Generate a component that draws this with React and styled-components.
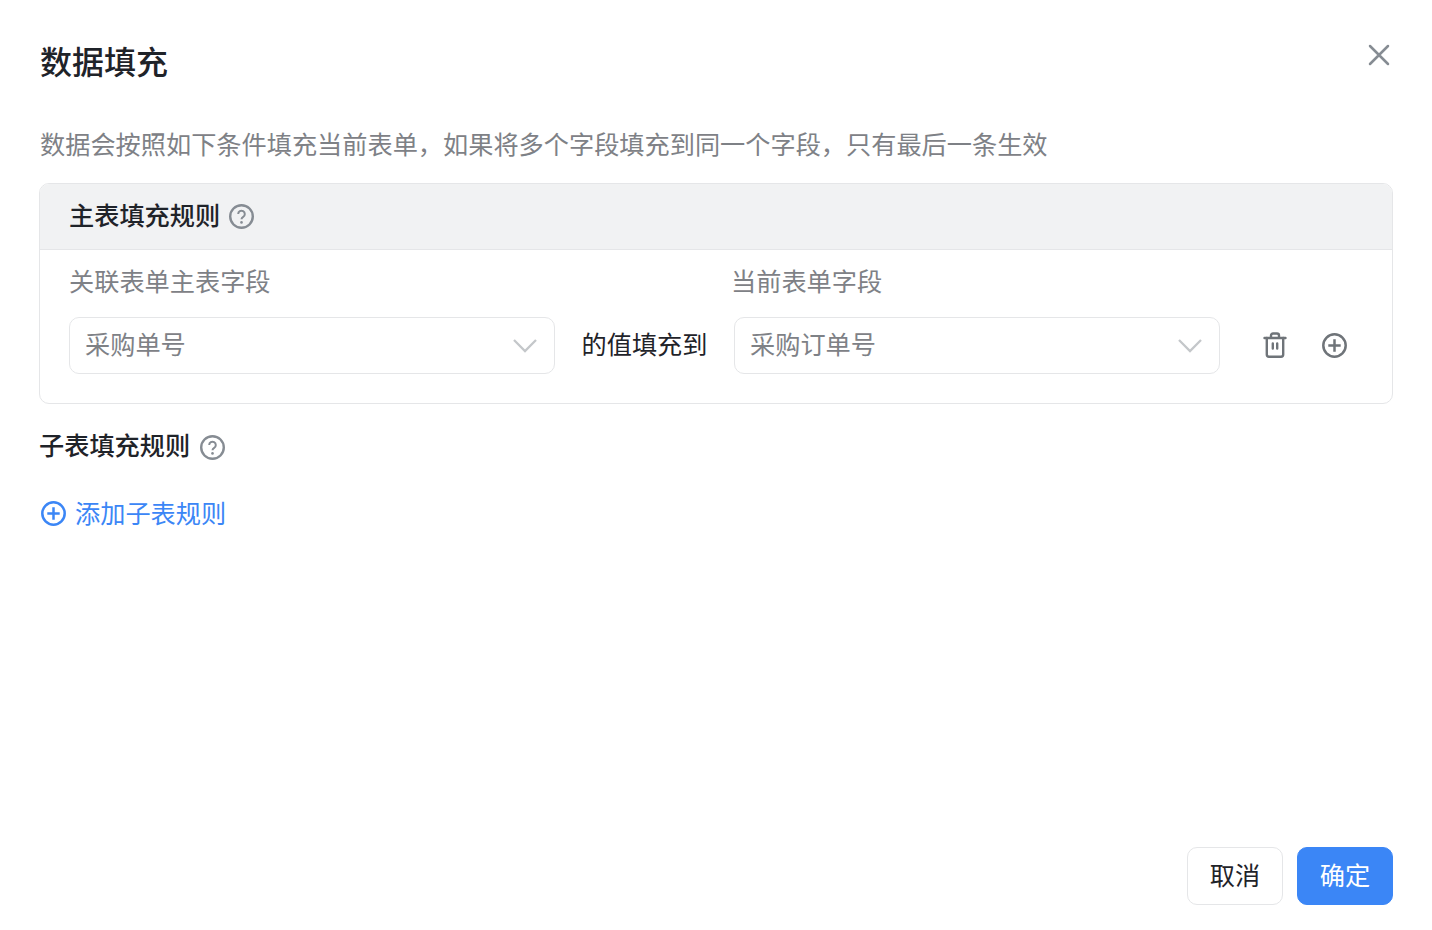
import React from "react";
import styled, { createGlobalStyle } from "styled-components";

const Global = createGlobalStyle`
  html, body { margin: 0; padding: 0; background: #fff; }
  body { font-family: "Liberation Sans", "Noto Sans CJK SC", sans-serif; }
  * { box-sizing: border-box; }
`;
const Dialog = styled.div`
  position: relative; width: 1432px; height: 930px; background: #fff;
  padding: 0 39px 25px 39px; display: flex; flex-direction: column; overflow: hidden;
`;
const Title = styled.h1`
  margin: 0 0 0 1px; padding-top: 41px; height: 127px; font-size: 32px; line-height: 44px; font-weight: 500; color: #1f2329;
`;
const Close = styled.button`
  position: absolute; top: 43px; right: 41px; width: 24px; height: 24px; padding: 0; border: 0; background: none; color: #868c93;
`;
const Desc = styled.p`
  margin: 0 0 0 1px; height: 56px; font-size: 25.2px; line-height: 36px; color: #7e8186;
`;
const Panel = styled.section`
  border: 1px solid #e5e6e8; border-radius: 10px; height: 221px; overflow: hidden;
`;
const PanelHead = styled.div`
  height: 66px; background: #f1f2f3; border-bottom: 1px solid #e5e6e8; padding-left: 29px;
  display: flex; align-items: center; gap: 9px;
`;
const SectionTitle = styled.span`
  font-size: 25.2px; line-height: 36px; font-weight: 500; color: #1f2329; position: relative; top: -1px;
`;
const Help = styled.svg`
  width: 25px; height: 25px; color: #868c93; flex: none;
`;
const PanelBody = styled.div`padding: 14px 44px 0 29px;`;
const Labels = styled.div`display: flex; height: 53px;`;
const Label = styled.span`
  font-size: 25.2px; line-height: 36px; color: #7e8186; width: ${p => p.$w}px;
`;
const Row = styled.div`display: flex; align-items: center;`;
const Select = styled.div`
  flex: none; width: 486px; height: 57px; border: 1px solid #e5e6e8; border-radius: 10px; padding: 0 16px 0 15px;
  display: flex; align-items: center; justify-content: space-between; font-size: 25.2px; color: #7e8186;
`;
const SelectValue = styled.span`line-height: 36px; margin-bottom: 2px;`;
const Chevron = styled.svg`width: 26px; height: 26px; color: #c4c7ca; margin-bottom: 2px;`;
const Joiner = styled.span`
  flex: none; width: 179px; text-align: center; font-size: 25.2px; line-height: 36px; margin-bottom: 2px; color: #1f2329;
`;
const Actions = styled.div`flex: none; display: flex; align-items: center; gap: 35px; margin-left: 43px; margin-bottom: 1px; color: #6f7479;`;
const Sub = styled.div`
  margin-top: 21px; height: 44px; display: flex; align-items: center; gap: 10px;
`;
const Add = styled.button`
  margin-top: 27px; padding: 0 0 0 2px; border: 0; background: none; display: flex; align-items: center; gap: 9px;
  color: #3b86f6; font: 25.2px/36px "Liberation Sans", "Noto Sans CJK SC", sans-serif; align-self: flex-start;
  svg { margin-bottom: 2px; }
`;
const Footer = styled.div`margin-top: auto; display: flex; justify-content: flex-end; gap: 14px;`;
const BtnLabel = styled.span`display: block; margin-top: -1px;`;
const Btn = styled.button`
  height: 58px; width: 96px; border-radius: 10px; font: 25.2px/36px "Liberation Sans", "Noto Sans CJK SC", sans-serif; padding: 0;
  border: 1px solid ${p => p.$primary ? "#3b86f6" : "#e5e6e8"};
  background: ${p => p.$primary ? "#3b86f6" : "#fff"}; color: ${p => p.$primary ? "#fff" : "#1f2329"};
`;
const HelpIcon = () => (
  <Help viewBox="0 0 25 25" fill="none" stroke="currentColor">
    <circle cx="12.5" cy="12.5" r="11.3" strokeWidth="2.4" />
    <path d="M9.200 10a3.300 3.300 0 1 1 5 2.800c-1.100.7-1.700 1.200-1.700 2.500" strokeWidth="2" />
    <circle cx="12.5" cy="18.400" r="1.300" fill="currentColor" stroke="none" />
  </Help>
);
const PlusIcon = () => (
  <svg width="25" height="25" viewBox="0 0 25 25" fill="none" stroke="currentColor" strokeWidth="2.5">
    <circle cx="12.5" cy="12.5" r="11.2" /><path d="M12.5 6.300v12.400M6.300 12.500h12.400" />
  </svg>
);
const TrashIcon = () => (
  <svg width="24" height="26" viewBox="0 0 24 26" fill="none" stroke="currentColor" strokeWidth="2.4" strokeLinecap="round">
    <path d="M1.500 6h21M8 6V3.500a2 2 0 0 1 2-2h4a2 2 0 0 1 2 2V6" />
    <path d="M3.800 6v16.500a2.200 2.200 0 0 0 2.200 2.200h12a2.200 2.200 0 0 0 2.200-2.200V6" />
    <path d="M9.800 11.500v5M14.200 11.500v5" />
  </svg>
);
const Arrow = () => (
  <Chevron viewBox="0 0 26 26" fill="none" stroke="currentColor" strokeWidth="2.3"><path d="M2 8l11 11L24 8" /></Chevron>
);
export default function App() {
  return (
    <Dialog>
      <Global />
      <Title>数据填充</Title>
      <Close aria-label="关闭">
        <svg width="24" height="24" viewBox="0 0 24 24" fill="none" stroke="currentColor" strokeWidth="2.5" strokeLinecap="round"><path d="M3 3l18 18M21 3L3 21" /></svg>
      </Close>
      <Desc>数据会按照如下条件填充当前表单，如果将多个字段填充到同一个字段，只有最后一条生效</Desc>
      <Panel>
        <PanelHead><SectionTitle>主表填充规则</SectionTitle><HelpIcon /></PanelHead>
        <PanelBody>
          <Labels><Label $w={662}>关联表单主表字段</Label><Label $w={300}>当前表单字段</Label></Labels>
          <Row>
            <Select><SelectValue>采购单号</SelectValue><Arrow /></Select>
            <Joiner>的值填充到</Joiner>
            <Select><SelectValue>采购订单号</SelectValue><Arrow /></Select>
            <Actions>
              <TrashIcon />
              <PlusIcon />
            </Actions>
          </Row>
        </PanelBody>
      </Panel>
      <Sub><SectionTitle>子表填充规则</SectionTitle><HelpIcon /></Sub>
      <Add><PlusIcon />添加子表规则</Add>
      <Footer><Btn><BtnLabel>取消</BtnLabel></Btn><Btn $primary><BtnLabel>确定</BtnLabel></Btn></Footer>
    </Dialog>
  );
}
